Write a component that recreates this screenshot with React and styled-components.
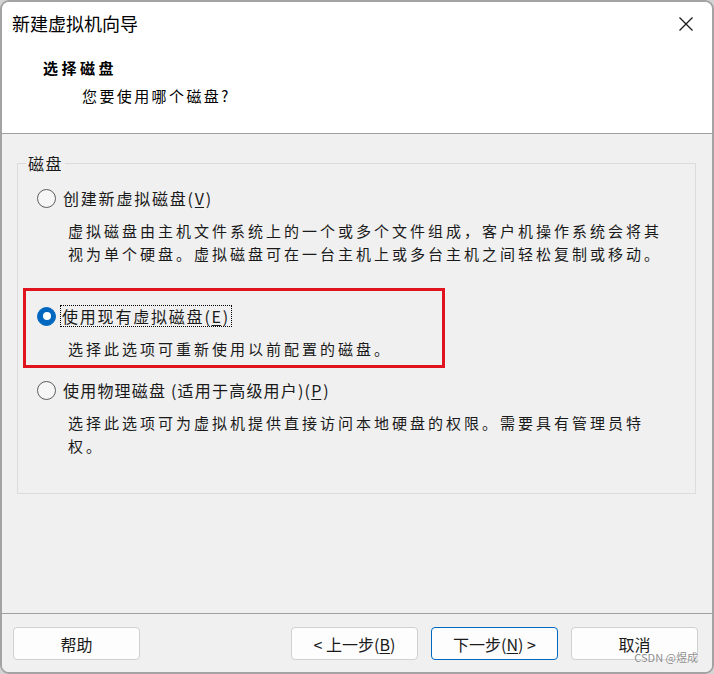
import React from 'react';
import styled, { createGlobalStyle } from 'styled-components';

const GlobalStyle = createGlobalStyle`
  html, body {
    margin: 0;
    padding: 0;
    background: #d4d4d4;
  }
  * {
    box-sizing: border-box;
  }
`;

const FONT = `"Noto Sans CJK SC", "Liberation Sans", sans-serif`;

export default function App() {
  return (
    <>
      <GlobalStyle />
      <Window>
        <TitleBar>
          <Title>新建虚拟机向导</Title>
          <CloseButton aria-label="关闭">
            <svg width="16" height="16" viewBox="0 0 16 16">
              <path d="M1.5 1.5 L14.5 14.5 M14.5 1.5 L1.5 14.5" stroke="#1a1a1a" strokeWidth="1.3" fill="none" />
            </svg>
          </CloseButton>
        </TitleBar>

        <Header>
          <Heading>选择磁盘</Heading>
          <SubHeading>您要使用哪个磁盘?</SubHeading>
        </Header>

        <Body>
          <Group>
            <Legend>磁盘</Legend>

            <Option $top={13}>
              <Row>
                <Radio />
                <Label>创建新虚拟磁盘(<u>V</u>)</Label>
              </Row>
              <Desc>
                虚拟磁盘由主机文件系统上的一个或多个文件组成，客户机操作系统会将其
                <br />
                视为单个硬盘。虚拟磁盘可在一台主机上或多台主机之间轻松复制或移动。
              </Desc>
            </Option>

            <Highlight>
              <Option $inset={11}>
                <Row>
                  <Radio $checked />
                  <Label $focused>使用现有虚拟磁盘(<u>E</u>)</Label>
                </Row>
                <Desc>选择此选项可重新使用以前配置的磁盘。</Desc>
              </Option>
            </Highlight>

            <Option $top={10}>
              <Row>
                <Radio />
                <Label $tight>使用物理磁盘 (适用于高级用户)(<u>P</u>)</Label>
              </Row>
              <Desc>
                选择此选项可为虚拟机提供直接访问本地硬盘的权限。需要具有管理员特
                <br />
                权。
              </Desc>
            </Option>
          </Group>
        </Body>

        <Footer>
          <Button>帮助</Button>
          <ButtonGroup>
            <Button>&lt; 上一步(<u>B</u>)</Button>
            <Button $primary>下一步(<u>N</u>) &gt;</Button>
            <Button>取消</Button>
          </ButtonGroup>
        </Footer>

        <Watermark>CSDN @煜成</Watermark>
      </Window>
    </>
  );
}

const Window = styled.div`
  position: relative;
  width: 714px;
  height: 674px;
  border: 2px solid #a3a3a3;
  border-radius: 9px;
  overflow: hidden;
  display: flex;
  flex-direction: column;
  background: #f0f0f0;
  font-family: ${FONT};
  color: #1a1a1a;
`;

const TitleBar = styled.div`
  height: 42px;
  flex: none;
  background: #ffffff;
  display: flex;
  align-items: center;
  justify-content: space-between;
  padding: 0 18px 0 10px;
`;

const Title = styled.div`
  font-size: 18px;
  line-height: 24px;
  color: #000;
`;

const CloseButton = styled.div`
  width: 16px;
  height: 16px;
  display: flex;
  margin-top: 1px;
`;

const Header = styled.div`
  height: 90px;
  flex: none;
  background: #ffffff;
  border-bottom: 1px solid #a0a0a0;
  padding: 13px 0 0 41px;
`;

const Heading = styled.div`
  font-size: 15px;
  font-weight: 700;
  line-height: 22px;
  letter-spacing: 3.5px;
  color: #000;
`;

const SubHeading = styled.div`
  margin: 6px 0 0 39px;
  font-size: 15px;
  line-height: 22px;
  letter-spacing: 2.4px;
  color: #000;
`;

const Body = styled.div`
  flex: 1;
  background: #f0f0f0;
  padding: 19px 16px 0 15px;
`;

const Group = styled.fieldset`
  margin: 0;
  padding: 0 0 36px 0;
  border: 1px solid #dcdcdc;
  min-width: 0;
`;

const Legend = styled.legend`
  margin-left: 8px;
  padding: 0 2px;
  font-size: 16px;
  line-height: 20px;
  letter-spacing: 1.5px;
  color: #1a1a1a;
`;

const Option = styled.div`
  margin-top: ${p => p.$top || 0}px;
  padding-left: ${p => (p.$inset != null ? p.$inset : 19)}px;
`;

const Row = styled.div`
  height: 24px;
  display: flex;
  align-items: center;
  gap: 7px;
`;

const Radio = styled.span`
  flex: none;
  width: 19px;
  height: 19px;
  border-radius: 50%;
  position: relative;
  background: ${p => (p.$checked ? '#0067c0' : '#f6f6f6')};
  border: 1px solid ${p => (p.$checked ? '#0067c0' : '#5c5c5c')};

  &::after {
    content: '';
    display: ${p => (p.$checked ? 'block' : 'none')};
    position: absolute;
    left: 50%;
    top: 50%;
    width: 8px;
    height: 8px;
    margin: -4px 0 0 -4px;
    border-radius: 50%;
    background: #ffffff;
  }
`;

const Label = styled.span`
  font-size: 16px;
  line-height: 20px;
  letter-spacing: ${p => (p.$tight ? '1.2px' : '1.8px')};
  white-space: nowrap;
  color: #1a1a1a;
  margin-left: ${p => (p.$focused ? '-2px' : '0')};
  padding: 0 ${p => (p.$focused ? '1px' : '0')};
  outline: ${p => (p.$focused ? '1px dotted #000' : 'none')};
  outline-offset: 0;

  u {
    text-underline-offset: 2px;
    letter-spacing: 0;
    margin-right: 1.8px;
  }
`;

const Desc = styled.div`
  margin: 9px 0 0 31px;
  font-size: 15px;
  line-height: 23px;
  letter-spacing: 3px;
  white-space: nowrap;
  color: #1a1a1a;
`;

const Highlight = styled.div`
  margin: 23px 0 0 5px;
  width: 422px;
  border: 3px solid #e0141f;
  padding: 13px 0 5px 0;
`;

const Footer = styled.div`
  flex: none;
  border-top: 1px solid #a0a0a0;
  background: #f0f0f0;
  padding: 13px 14px 12px 11px;
  display: flex;
  justify-content: space-between;
`;

const ButtonGroup = styled.div`
  display: flex;
  gap: 13px;
`;

const Button = styled.div`
  width: 127px;
  height: 33px;
  display: flex;
  align-items: center;
  justify-content: center;
  background: #fdfdfd;
  border: 1px solid ${p => (p.$primary ? '#0067c0' : '#d0d0d0')};
  border-radius: 4px;
  font-size: 16px;
  color: #1a1a1a;
  white-space: pre;

  u {
    text-underline-offset: 2px;
  }
`;

const Watermark = styled.div`
  position: absolute;
  right: 14px;
  bottom: 7px;
  font-family: ${FONT};
  font-size: 11px;
  color: rgba(120, 120, 120, 0.85);
  text-shadow: 0 0 2px #fff;
  pointer-events: none;
`;
